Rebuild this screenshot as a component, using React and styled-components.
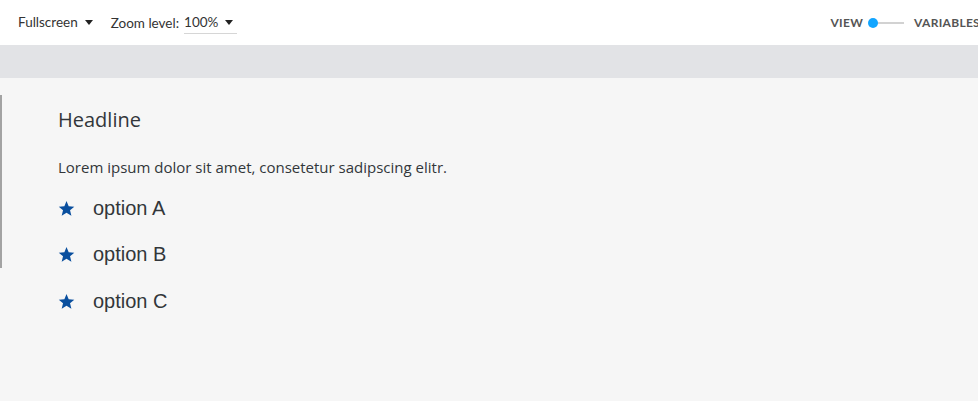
import React from "react"
import styled, { createGlobalStyle } from "styled-components"

const Global = createGlobalStyle`
  html, body { margin: 0; padding: 0; background: #f6f6f6; }
  #root { min-height: 401px; }
`

const Page = styled.div`
  width: 978px;
  height: 401px;
  overflow: hidden;
  display: flex;
  flex-direction: column;
  background: #f6f6f6;
`

const Toolbar = styled.div`
  height: 45px;
  flex: none;
  background: #fff;
  display: flex;
  align-items: center;
  justify-content: space-between;
  padding-left: 18px;
  font-family: Lato, "Liberation Sans", sans-serif;
  font-size: 13.5px;
  color: #333;
  white-space: nowrap;
`

const Group = styled.div`
  display: flex;
  align-items: center;
  flex: none;
  gap: ${p => p.gap || 0}px;
  margin-right: ${p => p.pull || 0}px;
`

const Dropdown = styled.span`
  display: inline-flex;
  align-items: center;
  gap: 7px;
  padding: 3px ${p => (p.underline ? 4 : 0)}px 3px 0;
  border-bottom: 1px solid ${p => (p.underline ? "#d6d6d6" : "transparent")};
`

const Caret = styled.span`
  width: 0;
  height: 0;
  border-left: 4px solid transparent;
  border-right: 4px solid transparent;
  border-top: 5px solid #222;
`

const ModeLabel = styled.span`
  font-size: 12px;
  font-weight: 700;
  letter-spacing: 0.3px;
  color: #555;
`

const Toggle = styled.span`
  position: relative;
  width: 36px;
  height: 10px;
  margin: 0 10px 0 5px;
  &::before {
    content: "";
    position: absolute;
    left: 3px;
    right: 0;
    top: 4px;
    height: 2px;
    background: #d2d2d2;
  }
  &::after {
    content: "";
    position: absolute;
    left: 0;
    top: 0;
    width: 10px;
    height: 10px;
    border-radius: 50%;
    background: #12a5ff;
  }
`

const Band = styled.div`
  height: 33px;
  flex: none;
  background: #e2e3e6;
`

const Canvas = styled.div`
  flex: 1;
  display: flex;
  padding-top: 17px;
`

const EdgeLine = styled.div`
  width: 2px;
  height: 173px;
  flex: none;
  background: #a3a3a3;
`

const Content = styled.div`
  padding-left: 56px;
  padding-top: 11px;
`

const Headline = styled.h2`
  margin: 0;
  font-family: "Open Sans", sans-serif;
  font-weight: 400;
  font-size: 20px;
  line-height: 27px;
  color: #32363a;
`

const Text = styled.p`
  margin: 24px 0 0;
  font-family: "Open Sans", sans-serif;
  font-size: 15px;
  line-height: 20px;
  color: #32363a;
`

const List = styled.ul`
  list-style: none;
  margin: 8px 0 0;
  padding: 0;
`

const Item = styled.li`
  display: flex;
  align-items: center;
  height: 46.5px;
  font-family: "Liberation Sans", Arial, sans-serif;
  font-size: 20px;
  color: #32363a;
  svg { margin-right: 18px; }
`

const Star = () => (
  <svg width="17" height="17" viewBox="0 0 24 24">
    <path fill="#0a4f9e" d="M12 1.5l3.1 7.3 7.9.6-6 5.2 1.9 7.7L12 18.1l-6.8 4.2 1.9-7.7-6-5.2 7.9-.6z" />
  </svg>
)

export default function App() {
  return (
    <Page>
      <Global />
      <Toolbar>
        <Group gap={18}>
          <Dropdown>Fullscreen <Caret /></Dropdown>
          <Group gap={5}>
            <span>Zoom level:</span>
            <Dropdown underline>100% <Caret /></Dropdown>
          </Group>
        </Group>
        <Group pull={-2}>
          <ModeLabel>VIEW</ModeLabel>
          <Toggle />
          <ModeLabel>VARIABLES</ModeLabel>
        </Group>
      </Toolbar>
      <Band />
      <Canvas>
        <EdgeLine />
        <Content>
          <Headline>Headline</Headline>
          <Text>Lorem ipsum dolor sit amet, consetetur sadipscing elitr.</Text>
          <List>
            {["option A", "option B", "option C"].map(o => (
              <Item key={o}><Star />{o}</Item>
            ))}
          </List>
        </Content>
      </Canvas>
    </Page>
  )
}
